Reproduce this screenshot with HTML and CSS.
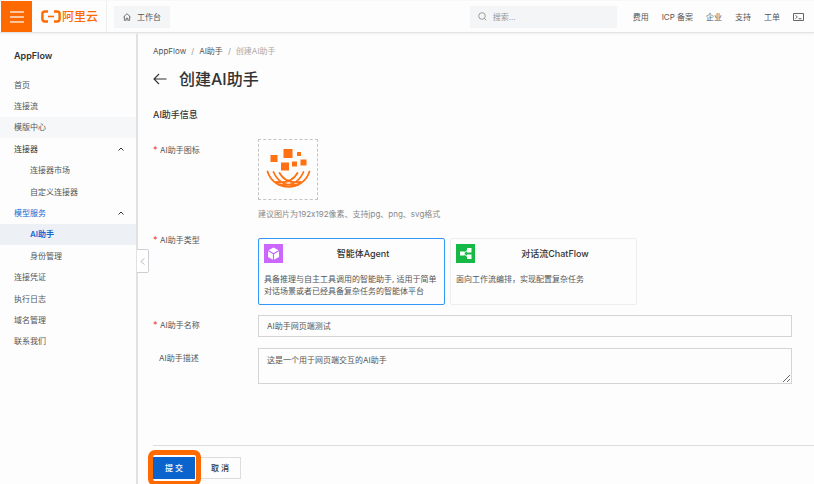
FILE: index.html
```html
<!DOCTYPE html>
<html lang="zh-CN">
<head>
<meta charset="utf-8">
<title>创建AI助手</title>
<link rel="stylesheet" href="styles.css">
</head>
<body>
<header class="topbar">
  <button class="menu" type="button" aria-label="菜单">
    <svg width="14" height="12" viewBox="0 0 14 12" fill="none" stroke="#ffe3cf" stroke-width="1.4"><path d="M0 1h14M0 6h14M0 11h14"/></svg>
  </button>
  <a class="brand" href="#">
    <svg width="20" height="13" viewBox="0 0 20 13" fill="none" stroke="#ff6a00" stroke-width="2.4"><path d="M7 1.500H4Q1.400 1.500 1.400 4v5Q1.400 11.500 4 11.500h3M13 1.500h3Q18.600 1.500 18.600 4v5Q18.600 11.500 16 11.500h-3"/><path d="M7 6.500h6" stroke-width="1.600"/></svg>
    <span>阿里云</span>
  </a>
  <a class="workbench" href="#">
    <svg width="8" height="8" viewBox="0 0 8 8" fill="none" stroke="#555" stroke-width=".8"><path d="M.5 4 4 .7 7.500 4M1.400 3.300v4h1.800V5.200h1.600v2.100h1.800v-4"/></svg>
    工作台
  </a>
  <label class="search">
    <svg width="9" height="9" viewBox="0 0 9 9" fill="none" stroke="#888" stroke-width=".8"><circle cx="4" cy="4" r="3.300"/><path d="m6.400 6.400 2 2"/></svg>
    <input type="text" placeholder="搜索..." aria-label="搜索">
  </label>
  <nav class="links">
    <a href="#">费用</a><a href="#">ICP 备案</a><a href="#">企业</a><a href="#">支持</a><a href="#">工单</a>
    <a href="#" aria-label="终端"><svg width="11" height="8" viewBox="0 0 11 8" fill="none" stroke="#666" stroke-width="1"><path d="M.5.5h10v7H.5zM2.500 2.200 4.300 4 2.500 5.800M5.500 5.700h3"/></svg></a>
  </nav>
</header>
<div class="body">
  <aside class="sidebar">
    <h2>AppFlow</h2>
    <nav class="nav">
      <a href="#">首页</a>
      <a href="#">连接流</a>
      <a class="hover" href="#">模版中心</a>
      <a class="group" href="#">连接器<svg width="6" height="4" viewBox="0 0 6 4" fill="none" stroke="#333"><path d="m.5 3.500 2.500-2.500 2.500 2.500"/></svg></a>
      <a class="sub" href="#">连接器市场</a>
      <a class="sub" href="#">自定义连接器</a>
      <a class="group open" href="#">模型服务<svg width="6" height="4" viewBox="0 0 6 4" fill="none" stroke="#333"><path d="m.5 3.500 2.500-2.500 2.500 2.500"/></svg></a>
      <a class="sub current" href="#">AI助手</a>
      <a class="sub" href="#">身份管理</a>
      <a href="#">连接凭证</a>
      <a href="#">执行日志</a>
      <a href="#">域名管理</a>
      <a href="#">联系我们</a>
    </nav>
    <button class="collapse" type="button" aria-label="收起">
      <svg width="5" height="7" viewBox="0 0 5 7" fill="none" stroke="#aaa" stroke-width=".8"><path d="M4.500.5.800 3.500l3.700 3"/></svg>
    </button>
  </aside>
  <main class="main">
    <nav class="crumbs"><a href="#">AppFlow</a><i>/</i><a href="#">AI助手</a><i>/</i><span>创建AI助手</span></nav>
    <div class="title">
      <a href="#" aria-label="返回"><svg width="14" height="12" viewBox="0 0 14 12" fill="none" stroke="#333" stroke-width="1.100"><path d="M13.500 6H1M6 1 1 6l5 5"/></svg></a>
      <h1>创建AI助手</h1>
    </div>
    <form class="form">
      <h3>AI助手信息</h3>
      <div class="row icon-row">
        <span class="label required">AI助手图标</span>
        <div>
          <button class="upload" type="button" aria-label="AI助手图标">
            <svg width="58" height="59" viewBox="1 1 58 59" fill="#ff7112"><path d="M12.500 16h7v7h-7zM25.500 10h9v9h-9zM39 13h4v4h-4zM23 23.500h8v8h-8zM34 22.500h5v5h-5zM42.500 20.500h6v6h-6z"/><g fill="none" stroke="#ff7112" stroke-width="1.800" stroke-linecap="round"><path d="M9.500 32.500C16 53 45 53 51.500 32.500"/><path d="M15.500 33c4 9 12 15 25 12.500M45.500 33c-4 9-12 15-25 12.500M21.500 34c4 7 11 10.500 21 9M39.500 34c-4 7-11 10.500-21 9"/></g></svg>
          </button>
          <p class="hint">建议图片为192x192像素、支持jpg、png、svg格式</p>
        </div>
      </div>
      <div class="row type-row">
        <span class="label required">AI助手类型</span>
        <div class="cards">
          <button class="card selected" type="button">
            <span class="card-head">
              <svg width="19" height="19" viewBox="0 0 19 19"><path fill="#cb66ff" d="M0 0h19v19H0z"/><path fill="#fff" d="m9.500 3.500 5.500 3v6.500l-5.500 3-5.500-3V6.500z"/><path fill="none" stroke="#cb66ff" stroke-width="1.200" d="M4 6.500 9.500 9.700 15 6.500M9.500 9.700V16"/></svg>
              <b>智能体Agent</b>
            </span>
            <span class="desc">具备推理与自主工具调用的智能助手, 适用于简单对话场景或者已经具备复杂任务的智能体平台</span>
          </button>
          <button class="card" type="button">
            <span class="card-head">
              <svg width="19" height="19" viewBox="0 0 19 19"><path fill="#16b945" d="M0 0h19v19H0z"/><path fill="#fff" d="M4 7.500h4.500v4H4zM11 4h4.500v4.500H11zM11 10.500h4.500V15H11z"/><path fill="none" stroke="#fff" d="M11.500 6.300 7.500 9.500l4 3.200"/></svg>
              <b>对话流ChatFlow</b>
            </span>
            <span class="desc">面向工作流编排，实现配置复杂任务</span>
          </button>
        </div>
      </div>
      <div class="row">
        <label class="label required" for="name">AI助手名称</label>
        <input class="field" id="name" type="text" value="AI助手网页端测试">
      </div>
      <div class="row">
        <label class="label" for="desc">AI助手描述</label>
        <textarea class="field area" id="desc">这是一个用于网页端交互的AI助手</textarea>
      </div>
    </form>
    <footer class="actions">
      <span class="highlight"><button class="btn primary" type="button">提 交</button></span>
      <button class="btn" type="button">取 消</button>
    </footer>
  </main>
</div>
</body>
</html>
```

FILE: styles.css
```css
* { box-sizing: border-box; }
html, body { margin: 0; }
body {
  min-height: 100vh;
  display: flex;
  flex-direction: column;
  background: #fdfdfd;
  color: #555;
  font: 8px/12px Inter, "Noto Sans CJK SC", sans-serif;
}
h1, h2, h3, p { margin: 0; }
a { color: inherit; text-decoration: none; }
button, input, textarea { font: inherit; color: inherit; margin: 0; padding: 0; border: 0; background: none; border-radius: 0; }
svg { display: block; flex: none; }

.topbar {
  position: relative;
  z-index: 2;
  display: flex;
  align-items: center;
  height: 33px;
  padding: 0 10px 0 1px;
  border-top: 1px solid #f8f8f8;
  border-bottom: 1px solid #e4e4e4;
  box-shadow: 0 1px 2px #eee;
}
.menu { display: grid; place-items: center; align-self: stretch; width: 31px; background: #ff6a00; }
.brand { display: flex; align-items: center; align-self: stretch; gap: 1px; width: 75px; padding-left: 9px; border-right: 1px solid #eee; color: #ff6a00; font-size: 12px; font-weight: 500; }
.workbench { display: flex; align-items: center; gap: 6px; height: 22px; margin-left: 7px; padding: 0 9px; background: #f4f5f7; }
.search { display: flex; align-items: center; gap: 6px; flex: 0 0 147px; height: 22px; margin-left: auto; padding: 0 8px; background: #f4f5f7; }
.search input { width: 100%; outline: 0; }
.search input::placeholder { color: #999; }
.links { display: flex; align-items: center; gap: 13px; margin-left: 16px; }

.body { display: flex; flex: 1; }
.sidebar { position: relative; flex: 0 0 138px; border-right: 2px solid #e0e1e3; }
.sidebar h2 { padding: 17px 14px 12px; font-size: 9px; line-height: 12px; font-weight: 600; color: #333; }
.nav { display: grid; grid-auto-rows: 1fr; min-height: 278px; }
.nav a { display: flex; align-items: center; justify-content: space-between; padding: 0 12px 0 14px; }
.nav .hover { background: #f6f7f8; }
.nav .group { color: #333; }
.nav .open { color: #1769cf; }
.nav .sub { padding-left: 30px; }
.nav .current { background: #edf0f5; color: #1769cf; font-weight: 600; }
.collapse { position: absolute; top: 216px; right: -13px; display: grid; place-items: center; width: 12px; height: 24px; background: #fff; border: 1px solid #ccd0d4; border-left: 0; border-radius: 0 2px 2px 0; }

.main { flex: 1; min-width: 0; display: flex; flex-direction: column; padding-left: 15px; }
.crumbs { display: flex; padding-top: 12px; }
.crumbs i { width: 13px; text-align: center; color: #999; font-style: normal; }
.crumbs span { color: #aaa; }
.title { display: flex; align-items: center; gap: 12px; margin-top: 12px; }
.title h1 { font-size: 16px; line-height: 20px; font-weight: 500; color: #333; }
.form { padding-right: 22px; }
.form h3 { margin: 20px 0 18px; font-size: 9px; line-height: 12px; font-weight: 500; color: #333; }
.row { display: grid; grid-template-columns: 105px 1fr; margin-bottom: 11px; }
.label { padding: 4px 0 0 6px; }
.required { padding-left: 0; }
.required::before { content: "*"; display: inline-block; width: 7px; color: #f03030; font-size: 9px; }
.upload { display: grid; place-items: center; width: 60px; height: 61px; border: 1px dashed #c4c4c4; }
.icon-row .label { padding-top: 5px; }
.icon-row { margin-bottom: 18px; }
.hint { margin-top: 8px; color: #888; }
.type-row { margin-bottom: 10px; }
.type-row .label { padding-top: 0; margin-top: -4px; }
.cards { display: grid; grid-template-columns: repeat(2, 187px); gap: 5px; }
.card { display: flex; flex-direction: column; height: 67px; padding: 5px; border: 1px solid #eee; border-radius: 2px; text-align: left; }
.card.selected { border-color: #3296fa; }
.card-head { display: flex; align-items: center; align-self: stretch; margin-bottom: 10px; }
.card-head b { flex: 1; padding-left: 4px; text-align: center; font-size: 9px; font-weight: 500; color: #333; }
.field { display: block; width: 100%; height: 22px; padding: 0 8px 2px; border: 1px solid #d4d4d4; outline: 0; }
.area { height: 36px; padding-top: 5px; resize: vertical; }

.actions { display: flex; align-items: flex-start; margin-top: auto; height: 39px; border-top: 1px solid #ddd; padding-top: 4px; }
.highlight { position: relative; z-index: 1; margin: 0 -2px 0 -5px; border: 5px solid #ff6a00; border-radius: 7px; padding: 2px 1px 2px 0; }
.btn { min-width: 42px; height: 22px; margin-top: 7px; border: 1px solid #ddd; color: #333; font-weight: 500; }
.primary { display: block; margin: 0; background: #0b63ce; border-color: #0b63ce; color: #fff; }
```
